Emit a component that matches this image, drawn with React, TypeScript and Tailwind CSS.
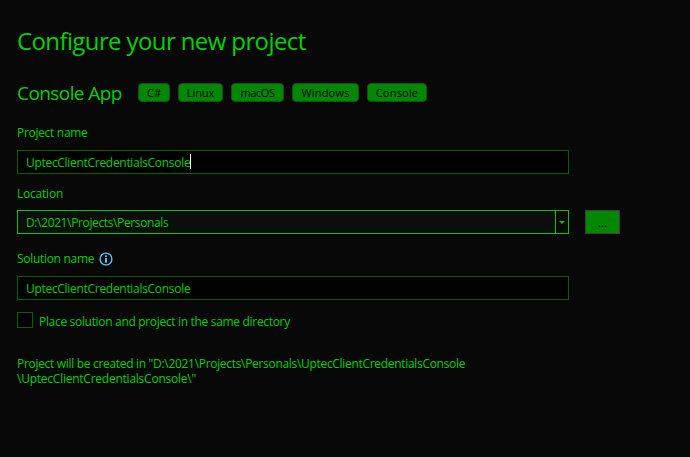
import React from "react";

const tags = [
  { label: "C#", box: "w-8", track: "tracking-[0px]" },
  { label: "Linux", box: "w-[45px]", track: "tracking-[-0.1px]" },
  { label: "macOS", box: "w-[53px]", track: "tracking-[-0.4px]" },
  { label: "Windows", box: "w-[67px]", track: "tracking-[0.2px]" },
  { label: "Console", box: "w-[60px]", track: "tracking-[0.2px]" },
];

function InfoIcon() {
  return (
    <svg width="14" height="14" viewBox="0 0 14 14" fill="none">
      <circle cx="7" cy="7" r="5.9" stroke="#55c1f0" strokeWidth="1.4" />
      <path d="M6 3.3h2v1.6H6zM6 6h2v4.7H6z" fill="#55c1f0" />
    </svg>
  );
}

export default function App() {
  return (
    <main className="h-[457px] w-[690px] overflow-hidden bg-[#080808] pt-[25px] pl-[17px] font-['Noto_Sans','Open_Sans',sans-serif] text-[12px] leading-4 whitespace-nowrap text-[#00d200]">
      <h1 className="h-8 text-[24px] leading-8 font-['Open_Sans'] tracking-[-0.61px]">Configure your new project</h1>

      <div className="mt-6 flex h-6 font-['Open_Sans']">
        <h2 className="w-[121px] text-[19px] leading-6 tracking-[-0.58px]">Console App</h2>
        <div className="mt-[2px] flex gap-2">
          {tags.map((t) => (
            <span
              key={t.label}
              className={`flex h-[19px] items-center justify-center rounded-[4px] border border-[#1c4a1c] bg-[#008800] text-[11px] leading-4 text-black ${t.box} ${t.track}`}
            >
              {t.label}
            </span>
          ))}
        </div>
      </div>

      <div className="font-['Open_Sans']">
        <label className="mt-5 block h-4 tracking-[-0.3px]">Project name</label>
        <div className="mt-[9px] flex h-6 w-[552px] items-center border border-[#006400] bg-black pl-2">
          <span className="pt-px tracking-[-0.3px]">UptecClientCredentialsConsole</span>
          <span className="mb-px h-[15px] w-px bg-white" />
        </div>

        <label className="mt-3 block h-4 tracking-[-0.22px]">Location</label>
        <div className="mt-2 flex h-6 gap-4">
          <div className="flex w-[552px] items-center border border-[#00c800] bg-[#0d0d0d] pl-2">
            <span className="flex-1 pt-[2px] tracking-[-0.37px]">D:\2021\Projects\Personals</span>
            <span className="flex h-full w-[13px] items-center justify-center border-l border-[#00c800] bg-[#080808] pt-px">
              <svg width="6" height="3" viewBox="0 0 6 3">
                <path d="M0 0h6L3 3z" fill="#00c800" />
              </svg>
            </span>
          </div>
          <button className="flex w-[35px] items-center justify-center border border-[#3c3c3c] bg-[#008800] pt-[2px] text-black">
            ...
          </button>
        </div>

        <label className="mt-[17px] flex h-4 items-center">
          <span className="w-[82px] tracking-[-0.3px]">Solution name</span>
          <InfoIcon />
        </label>
        <div className="mt-[9px] flex h-6 w-[552px] items-center border border-[#006400] bg-black pl-2">
          <span className="pt-px tracking-[-0.3px]">UptecClientCredentialsConsole</span>
        </div>

        <label className="mt-3 flex h-4 gap-[6px]">
          <span className="size-4 border border-[#006400] bg-black" />
          <span className="mt-[2px] tracking-[-0.32px]">Place solution and project in the same directory</span>
        </label>

        <p className="mt-7 leading-[15px]">
          <span className="block h-[15px] tracking-[-0.31px]">
            Project will be created in "D:\2021\Projects\Personals\UptecClientCredentialsConsole
          </span>
          <span className="block h-[15px] tracking-[-0.24px]">\UptecClientCredentialsConsole\"</span>
        </p>
      </div>
    </main>
  );
}
